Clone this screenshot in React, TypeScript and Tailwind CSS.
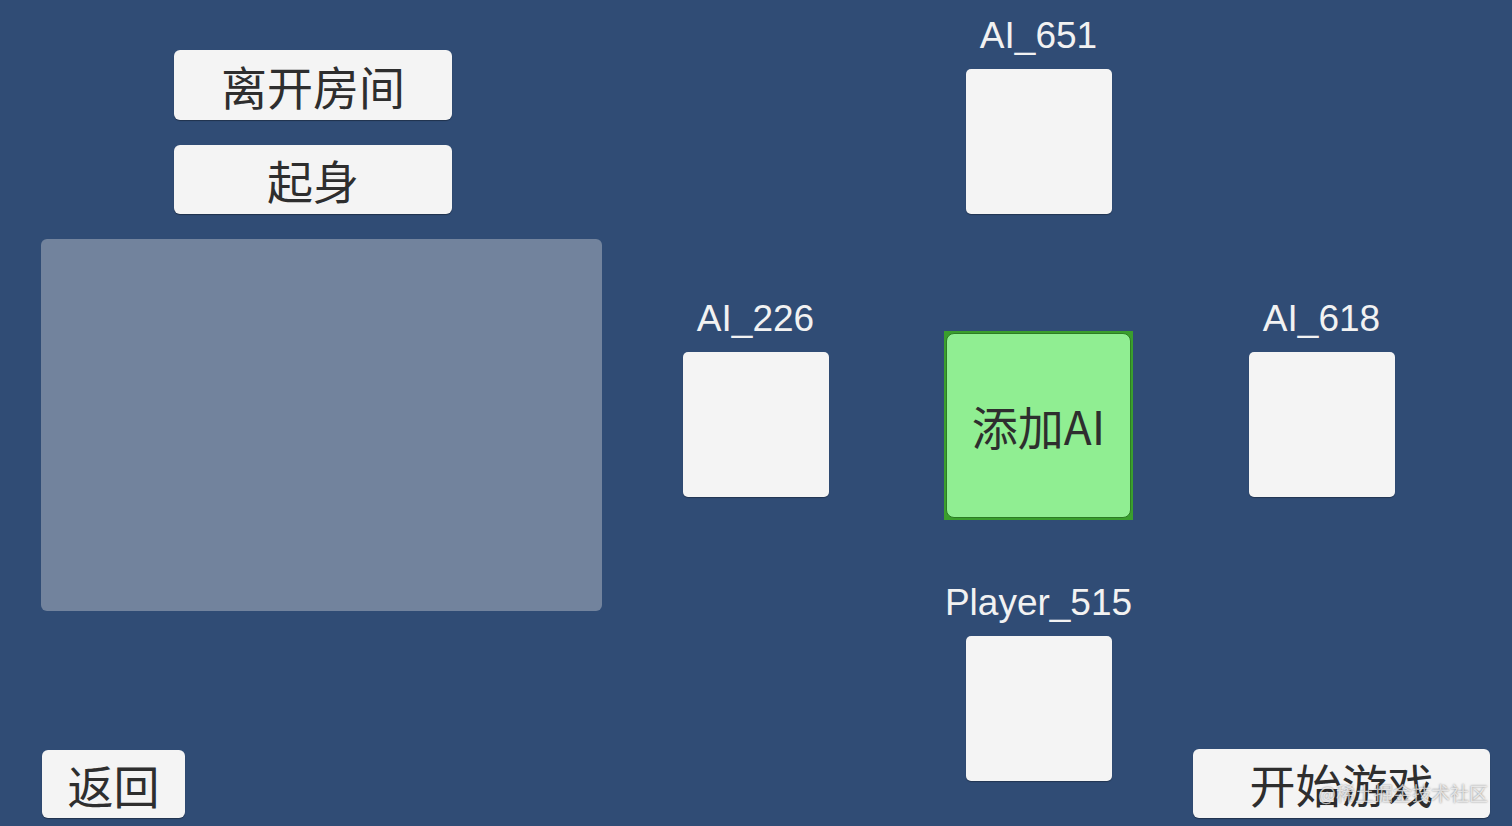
import React from 'react';

const cjk = "font-['Noto_Sans_CJK_SC','Noto_Sans',sans-serif]";
const latin = "font-['Liberation_Sans',Arial,sans-serif]";

const btn =
  'flex items-center justify-center bg-[#f4f4f4] rounded-[6px] text-[#2e2e2e] shadow-[0_1px_1px_rgba(0,0,0,0.35)]';

// one seat: name on top, empty white card below
const Seat: React.FC<{ name: string }> = ({ name }) => (
  <div className="flex flex-col items-center">
    <div className={`h-[40px] leading-[40px] text-[37px] text-[#f2f2f2] ${latin}`}>{name}</div>
    <div className="mt-[13px] w-[146px] h-[145px] bg-[#f4f4f4] rounded-[5px] shadow-[0_1px_1px_rgba(0,0,0,0.3)]" />
  </div>
);

export default function App() {
  return (
    <div className="relative w-[1512px] h-[826px] overflow-hidden bg-[#304c75] flex">
      {/* left column: room actions + chat panel + back */}
      <div className="flex flex-col pl-[41px] pt-[50px] w-[614px] shrink-0">
        <button className={`${btn} ${cjk} ml-[133px] w-[278px] h-[70px] text-[46px]`}>离开房间</button>
        <button className={`${btn} ${cjk} ml-[133px] mt-[25px] w-[278px] h-[69px] text-[46px]`}>起身</button>
        <div className="mt-[25px] w-[561px] h-[372px] bg-[#72839d] rounded-[6px]" />
        <button className={`${btn} ${cjk} ml-[1px] mt-[139px] w-[143px] h-[68px] text-[46px]`}>返回</button>
      </div>

      {/* seats laid out in a cross */}
      <div className="grid grid-cols-[283px_283px_283px] grid-rows-[283px_284px_1fr] pt-[16px] flex-1">
        <div />
        <Seat name="AI_651" />
        <div />

        <Seat name="AI_226" />
        <div className="flex justify-center">
          <div className="mt-[32px] w-[189px] h-[189px] bg-[#3a9e2d] p-[2px]">
            <div className={`w-full h-full rounded-[8px] bg-[#90ee92] border border-[#2c7d24] flex items-center justify-center text-[46px] text-[#2e2e2e] ${cjk}`}>
              添加AI
            </div>
          </div>
        </div>
        <Seat name="AI_618" />

        <div />
        <Seat name="Player_515" />
        <div className="flex items-start">
          <button className={`${btn} ${cjk} ml-[13px] mt-[166px] w-[297px] h-[69px] text-[46px] shrink-0`}>开始游戏</button>
        </div>
      </div>

      {/* watermark */}
      <div
        className={`absolute right-[24px] bottom-[24px] text-[19px] leading-none text-white/70 [text-shadow:0_0_2px_rgba(0,0,0,0.5)] ${cjk}`}
      >
        @稀土掘金技术社区
      </div>
    </div>
  );
}
